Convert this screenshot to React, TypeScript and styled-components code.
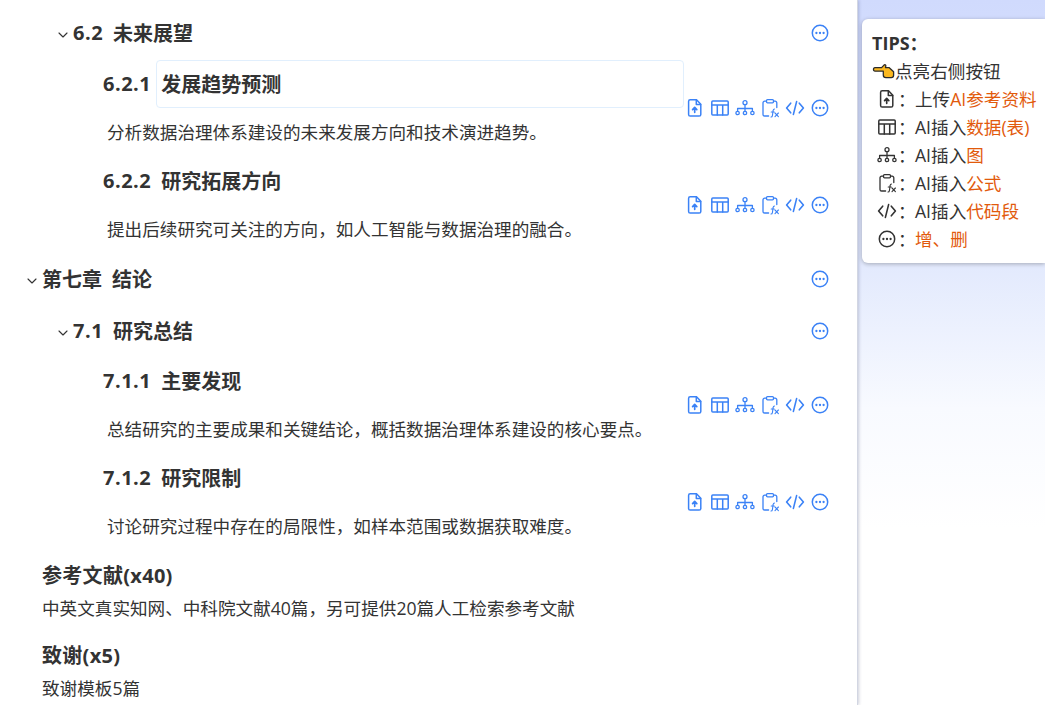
import styled, { createGlobalStyle } from "styled-components";
import { ChevronDown } from "lucide-react";

const Global = createGlobalStyle`
  html, body { margin: 0; padding: 0; height: 100%; overflow: hidden; }
  body { font-family: "Open Sans", "Noto Sans CJK SC", sans-serif; color: #333; background: #fff; }
`;

const Page = styled.div`
  display: flex;
  height: 705px;
  overflow: hidden;
`;

const Outline = styled.main`
  width: 857px;
  flex: none;
  padding-top: 9px;
  background: #fff;
  border-right: 1px solid #d2d6e2;
  box-shadow: 1px 0 3px rgba(30, 40, 90, 0.22);
  position: relative;
  z-index: 1;
`;

const Row = styled.div<{ $gap?: number }>`
  display: flex;
  align-items: center;
  width: 830px;
  margin-bottom: ${(p) => p.$gap ?? 0}px;
`;

const RowBody = styled.div<{ $indent: number }>`
  flex: 1;
  min-width: 0;
  padding-left: ${(p) => p.$indent}px;
`;

const Heading = styled.div`
  display: flex;
  align-items: center;
  height: 48px;
  font-size: 20px;
  font-weight: 700;
  color: #333;
  white-space: nowrap;
`;

const Caret = styled.span`
  display: flex;
  width: 16px;
  margin-right: 2px;
  justify-content: center;
  padding-top: 3px;
  color: #333;
`;

const Num = styled.span<{ $gap: number; $tight?: boolean }>`
  margin-right: ${(p) => p.$gap}px;
  margin-bottom: 2px;
  letter-spacing: ${(p) => (p.$tight ? 0 : 0.5)}px;
`;

const Label = styled.span`
  margin-bottom: 2px;
`;

const TitleBox = styled.span<{ $active?: boolean }>`
  display: flex;
  align-items: center;
  flex: 1;
  height: 48px;
  box-sizing: border-box;
  padding: 0 0 2px 4px;
  border: 1px solid ${(p) => (p.$active ? "#e1effd" : "transparent")};
  border-radius: 4px;
`;

const Para = styled.p`
  margin: 0;
  height: 48px;
  padding-left: 4px;
  font-size: 17.6px;
  line-height: 48px;
  color: #333;
  white-space: nowrap;
`;

const Actions = styled.div`
  display: flex;
  align-items: center;
  justify-content: flex-end;
  gap: 5px;
  width: 146px;
  color: #3b82f6;
  flex: none;
`;

const Ref = styled.section<{ $gap?: number }>`
  padding-left: 42px;
  margin-bottom: ${(p) => p.$gap ?? 0}px;
`;

const RefTitle = styled.div`
  font-size: 20px;
  font-weight: 700;
  line-height: 24px;
  letter-spacing: 0.3px;
`;

const RefText = styled.div`
  margin-top: 8px;
  font-size: 17.6px;
  line-height: 24px;
  white-space: nowrap;
`;

const Side = styled.aside`
  flex: 1;
  padding: 19px 0 0 4px;
  background: linear-gradient(180deg, #d0dafd 0%, #e3eafd 38%, #f8faff 58%, #ffffff 75%);
`;

const Tips = styled.div`
  height: 244px;
  box-sizing: border-box;
  padding: 10px 0 0 10px;
  background: #fff;
  border-radius: 6px 0 0 6px;
  box-shadow: 0 1px 4px rgba(0, 0, 0, 0.28);
  font-size: 17.6px;
  line-height: 28px;
  color: #333;
`;

const TipsTitle = styled.div`
  font-size: 18px;
  font-weight: 700;
  line-height: 28px;
`;

const TipLine = styled.div`
  display: flex;
  align-items: center;
  height: 28px;
  white-space: nowrap;
`;

const TipIcon = styled.span`
  display: flex;
  justify-content: center;
  flex: none;
  width: 30px;
  color: #333;
`;

const Colon = styled.span`
  flex: none;
  width: 17px;
  margin-left: -4px;
`;

const Hot = styled.span`
  color: #e25a0c;
`;

const S = { fill: "none", stroke: "currentColor", strokeWidth: 1.5, strokeLinecap: "round", strokeLinejoin: "round" } as const;

function UploadIcon() {
  return (
    <svg width="20" height="20" viewBox="0 0 20 20" {...S}>
      <path d="M5.2 1.8h6.3l4.3 4.4v10.3a1.6 1.6 0 0 1-1.6 1.6H5.2a1.6 1.6 0 0 1-1.6-1.6V3.4a1.6 1.6 0 0 1 1.6-1.6z" />
      <path d="M11.3 2v4.4h4.3" />
      <path d="M9.7 14.3V9.6M7.6 11.6l2.1-2.2 2.1 2.2" strokeWidth={1.7} />
    </svg>
  );
}

function TableIcon() {
  return (
    <svg width="20" height="20" viewBox="0 0 20 20" {...S}>
      <rect x="1.8" y="3" width="16.4" height="14" rx="1" />
      <path d="M1.8 7h16.4M7.3 7v10M12.7 7v10" />
    </svg>
  );
}

function TreeIcon() {
  return (
    <svg width="20" height="20" viewBox="0 0 20 20" {...S} strokeWidth={1.3}>
      <circle cx="10" cy="4.7" r="2" />
      <circle cx="2.6" cy="15" r="1.7" />
      <circle cx="10" cy="15" r="1.7" />
      <circle cx="17.4" cy="15" r="1.7" />
      <path d="M10 6.7v6.6M2.6 13.3v-2.8h14.8v2.8" />
    </svg>
  );
}

function FormulaIcon() {
  return (
    <svg width="20" height="20" viewBox="0 0 20 20" {...S} strokeWidth={1.3}>
      <path d="M6.5 3.2H4.6A1.6 1.6 0 0 0 3 4.8v11.6A1.6 1.6 0 0 0 4.6 18h4" />
      <path d="M13.5 3.2h1.7a1.6 1.6 0 0 1 1.6 1.6V9.5" />
      <rect x="6.5" y="1.6" width="7" height="3.2" rx="1" />
      <path d="M11 19c1.1 0 1.3-.6 1.4-1.4l.8-5.4c.1-.8.5-1.2 1.3-1.2M11.2 14h3M15 15l3.4 3.6M18.4 15L15 18.6" strokeWidth={1.1} />
    </svg>
  );
}

function CodeIcon() {
  return (
    <svg width="20" height="20" viewBox="0 0 20 20" {...S} strokeWidth={1.6}>
      <path d="M5.7 5.2L1.6 10l4.1 4.8M14.3 5.2l4.1 4.8-4.1 4.8M11.6 3.6L8.4 16.4" />
    </svg>
  );
}

function MoreIcon() {
  return (
    <svg width="20" height="20" viewBox="0 0 20 20" {...S}>
      <circle cx="10" cy="10" r="7.7" />
      <g fill="currentColor" stroke="none">
        <circle cx="6.4" cy="10" r="1.15" />
        <circle cx="10" cy="10" r="1.15" />
        <circle cx="13.6" cy="10" r="1.15" />
      </g>
    </svg>
  );
}

function HandIcon() {
  return (
    <svg width="23" height="16" viewBox="0 0 23 16">
      <path
        d="M3 4.6h6.6l2.4-2.5c.9-.8 2-.2 1.8.9l-.3 1.6H17l4.6 4.2v3.4c0 1.4-1 2.4-2.4 2.4h-5.2c-1.6 0-2.7-1-2.7-2.6V8.2H3C1 8.2 1 4.6 3 4.6z"
        fill="#fbb81f"
        stroke="#2b2b2b"
        strokeWidth="1.3"
        strokeLinejoin="round"
      />
    </svg>
  );
}

const Tools = () => (
  <Actions>
    <UploadIcon />
    <TableIcon />
    <TreeIcon />
    <FormulaIcon />
    <CodeIcon />
    <MoreIcon />
  </Actions>
);

const OnlyMore = () => (
  <Actions>
    <MoreIcon />
  </Actions>
);

function Section(props: { num: string; title: string; text: string; active?: boolean; gap?: number }) {
  return (
    <Row $gap={props.gap}>
      <RowBody $indent={103}>
        <Heading>
          <Num $gap={5}>{props.num}</Num>
          <TitleBox $active={props.active}>{props.title}</TitleBox>
        </Heading>
        <Para>{props.text}</Para>
      </RowBody>
      <Tools />
    </Row>
  );
}

function Branch(props: { num: string; label: string; indent: number; gap?: number; chapter?: boolean }) {
  return (
    <Row $gap={props.gap}>
      <RowBody $indent={props.indent}>
        <Heading>
          <Caret>
            <ChevronDown size={16} strokeWidth={1.7} />
          </Caret>
          <Num $gap={10} $tight={props.chapter}>{props.num}</Num>
          <Label>{props.label}</Label>
        </Heading>
      </RowBody>
      <OnlyMore />
    </Row>
  );
}

export default function App() {
  return (
    <Page>
      <Global />
      <Outline>
        <Branch num="6.2" label="未来展望" indent={55} gap={3} />
        <Section num="6.2.1" title="发展趋势预测" text="分析数据治理体系建设的未来发展方向和技术演进趋势。" active gap={1} />
        <Section num="6.2.2" title="研究拓展方向" text="提出后续研究可关注的方向，如人工智能与数据治理的融合。" gap={2} />
        <Branch num="第七章" label="结论" indent={24} gap={4} chapter />
        <Branch num="7.1" label="研究总结" indent={55} gap={2} />
        <Section num="7.1.1" title="主要发现" text="总结研究的主要成果和关键结论，概括数据治理体系建设的核心要点。" gap={1} />
        <Section num="7.1.2" title="研究限制" text="讨论研究过程中存在的局限性，如样本范围或数据获取难度。" gap={14} />
        <Ref $gap={24}>
          <RefTitle>参考文献(x40)</RefTitle>
          <RefText>中英文真实知网、中科院文献40篇，另可提供20篇人工检索参考文献</RefText>
        </Ref>
        <Ref>
          <RefTitle>致谢(x5)</RefTitle>
          <RefText>致谢模板5篇</RefText>
        </Ref>
      </Outline>
      <Side>
        <Tips>
          <TipsTitle>TIPS：</TipsTitle>
          <TipLine>
            <HandIcon />
            点亮右侧按钮
          </TipLine>
          <TipLine>
            <TipIcon><UploadIcon /></TipIcon>
            <Colon>：</Colon>上传<Hot>AI参考资料</Hot>
          </TipLine>
          <TipLine>
            <TipIcon><TableIcon /></TipIcon>
            <Colon>：</Colon>AI插入<Hot>数据(表)</Hot>
          </TipLine>
          <TipLine>
            <TipIcon><TreeIcon /></TipIcon>
            <Colon>：</Colon>AI插入<Hot>图</Hot>
          </TipLine>
          <TipLine>
            <TipIcon><FormulaIcon /></TipIcon>
            <Colon>：</Colon>AI插入<Hot>公式</Hot>
          </TipLine>
          <TipLine>
            <TipIcon><CodeIcon /></TipIcon>
            <Colon>：</Colon>AI插入<Hot>代码段</Hot>
          </TipLine>
          <TipLine>
            <TipIcon><MoreIcon /></TipIcon>
            <Colon>：</Colon><Hot>增、删</Hot>
          </TipLine>
        </Tips>
      </Side>
    </Page>
  );
}
